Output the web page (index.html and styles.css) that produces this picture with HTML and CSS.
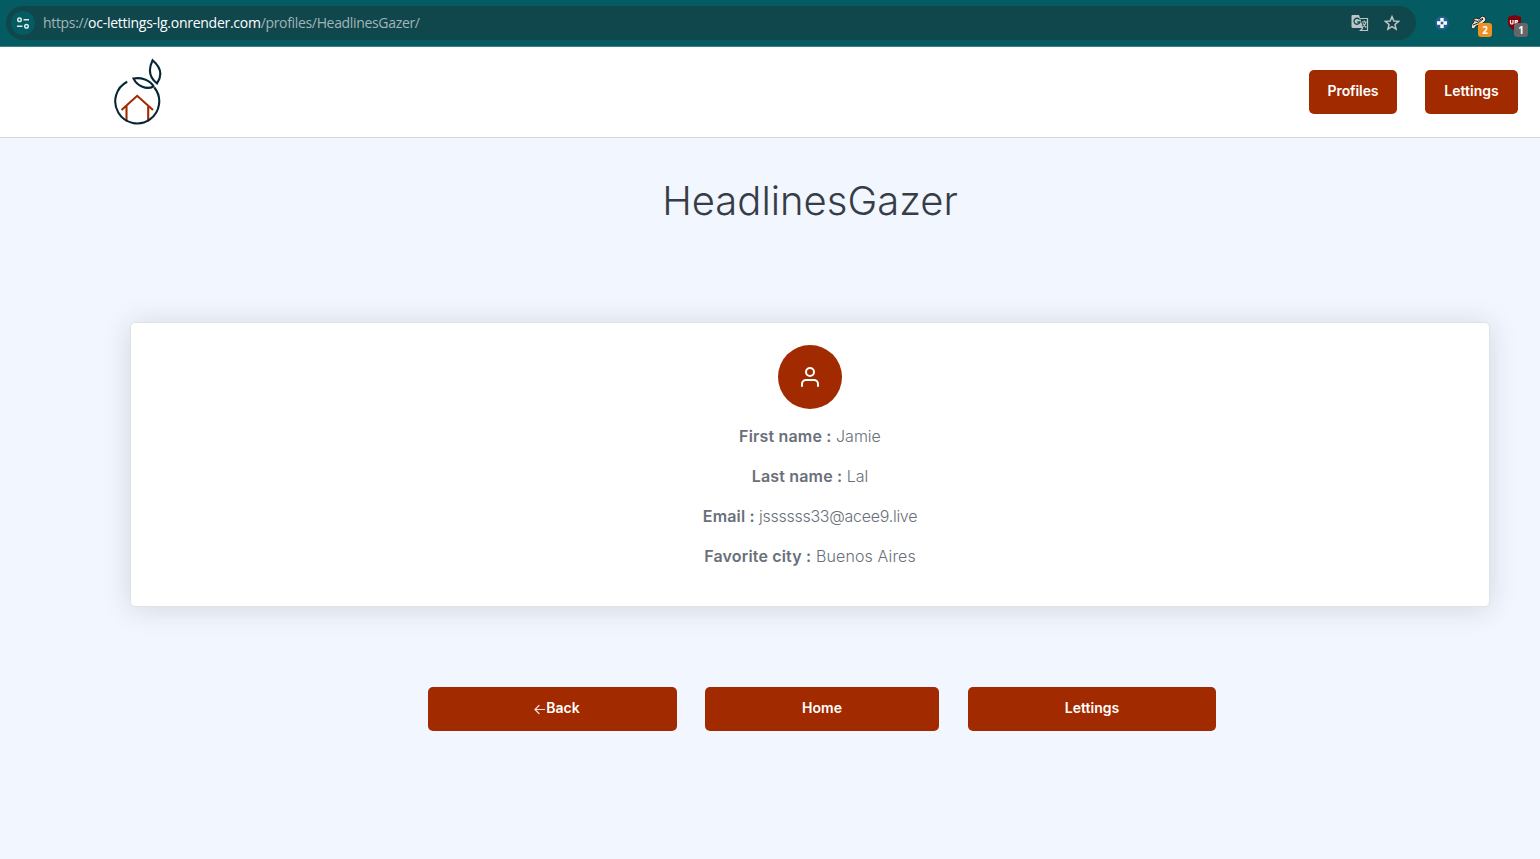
FILE: index.html
```
<!DOCTYPE html>
<html lang="en">
<head>
<meta charset="utf-8">
<title>HeadlinesGazer</title>
<link rel="stylesheet" href="styles.css">
</head>
<body>
<div class="browser-bar">
  <div class="address">
    <span class="site-info"><svg width="14" height="14" viewBox="0 0 14 14" fill="none" stroke="#dce9ea" stroke-width="1.5"><circle cx="3.5" cy="3.7" r="1.8"/><path d="M7.5 3.7H13M1 10.3H6.5"/><circle cx="10.5" cy="10.3" r="1.8"/></svg></span>
    <span class="url">https://<b>oc-lettings-lg.onrender.com</b>/profiles/HeadlinesGazer/</span>
    <svg class="translate" width="18" height="18" viewBox="0 0 18 18"><path fill="#bdc4c4" d="M1.500 1H8l1.200 3.500L12.300 14H2a1.500 1.500 0 0 1-1.500-1.500V2A1 1 0 0 1 1.500 1z"/><path d="M8.500 5.600A3 3 0 1 0 8.900 8H6.300" fill="none" stroke="#114a50" stroke-width="1.300"/><path fill="#10474d" d="M9.500 5H16v11h-5l1.300-2z"/><path d="M9 4.500h7.500v12H9.500l2.500-2.500M10.800 8h5M13.300 6.500V8M15 8c-.5 2.500-1.500 4-3 4.700M11.900 9.500l3.300 4" fill="none" stroke="#bdc4c4" stroke-width="1.200"/></svg>
    <svg class="star" width="16" height="16" viewBox="0 0 16 16" fill="none" stroke="#bdc4c4" stroke-width="1.500"><path d="M8 1.600l1.850 4.350 4.750.4-3.600 3.100 1.080 4.650L8 11.650 3.920 14.100 5 9.450 1.400 6.350l4.750-.4z"/></svg>
  </div>
  <div class="extensions">
    <svg width="14" height="14" viewBox="0 0 14 14"><circle cx="7" cy="7" r="7" fill="#235f91"/><path fill="#fff" d="M5.300 2h3.400v3.300H12v3.400H8.700V12H5.300V8.700H2V5.300h3.300z"/><rect x="5.700" y="5.700" width="2.600" height="2.600" fill="#235f91"/></svg>
    <span class="ext"><svg width="18" height="16" viewBox="0 0 18 16"><path d="M1 13l1-4 2-2-1-2 3-2 3 1 3-3 3 1 1 3-3 3-4 2-3 1-2 3z" fill="#e9ded1" stroke="#17201f" stroke-width=".9"/><path d="M4 5.500l4 1 2-2 3-1M3 10l5-2 5-4" stroke="#17201f" fill="none"/><path d="M7 9l2-1" stroke="#e57932"/></svg><i class="badge orange">2</i></span>
    <span class="ext"><svg width="16" height="16" viewBox="0 0 16 16"><path d="M8 0l6 2v5c0 4-2 6.500-6 8.500C3 13.500 1 11 1 7V2z" fill="#800009"/><path d="M3.500 5v3q0 1 1.300 1T6 8V5M8.200 9V5.500h2q1.500 1.500-2 2" fill="none" stroke="#fff" stroke-width="1.200"/></svg><i class="badge gray">1</i></span>
  </div>
</div>
<header class="topnav">
  <svg class="logo" width="48" height="68" viewBox="0 0 48 68" fill="none" stroke-width="2.100"><g stroke="#a22a00"><path d="M7.500 52L23.200 37.800 39 52M12.500 48v15.500M34.200 48v15.500"/></g><g stroke="#062733"><path d="M13.200 23.800A22 22 0 1 0 40.300 29.500"/><path d="M19.500 20.500c7-1.500 17 1.500 20 8-7 3.500-16 0-20-8z"/><path d="M38.600 2.200c8 6.800 10 15 4.400 23.200-8.500-6.500-8.500-14.800-4.400-23.200z"/></g></svg>
  <nav><a class="btn profiles">Profiles</a><a class="btn lettings">Lettings</a></nav>
</header>
<main>
  <h1>HeadlinesGazer</h1>
  <section class="card">
    <div class="avatar"><svg width="24" height="24" viewBox="0 0 24 24" fill="none" stroke="#fff" stroke-width="2" stroke-linecap="round" stroke-linejoin="round"><path d="M20 21v-2a4 4 0 0 0-4-4H8a4 4 0 0 0-4 4v2"/><circle cx="12" cy="7" r="4"/></svg></div>
    <p><strong>First name :</strong> Jamie</p>
    <p><strong>Last name :</strong> Lal</p>
    <p class="email"><strong>Email :</strong> jssssss33@acee9.live</p>
    <p class="city"><strong>Favorite city :</strong> Buenos Aires</p>
  </section>
</main>
<div class="actions">
  <a class="btn back"><svg width="11" height="11" viewBox="0 0 11 11" fill="none" stroke="#f3dfd8" stroke-width="1.200" stroke-linecap="round" stroke-linejoin="round"><path d="M10.500 5.500H1M5 1.500l-4 4 4 4"/></svg><span>Back</span></a>
  <a class="btn home">Home</a>
  <a class="btn to-lettings">Lettings</a>
</div>
</body>
</html>
```
FILE: styles.css
```
* { box-sizing: border-box; }
body { margin: 0; height: 859px; overflow: hidden; background: #f2f6fe; color: #69707a; font-family: Inter, sans-serif; }
svg { display: block; flex: none; }
.browser-bar { height: 47px; background: #045b61; border-bottom: 1px solid #3d7f84; display: flex; align-items: flex-start; padding: 6px 12px 0 6px; }
.address { width: 1410px; height: 34px; border-radius: 17px; background: #10474d; display: flex; align-items: center; padding: 0 16px 0 5px; }
.site-info { width: 24px; height: 24px; border-radius: 50%; background: #045b61; display: flex; align-items: center; justify-content: center; }
.url { margin-left: 8px; flex: 1; font: 14px/20px "Open Sans", "Noto Sans", sans-serif; letter-spacing: -.33px; color: #a0b5b7; white-space: nowrap; }
.url b { font-weight: 400; color: #fff; letter-spacing: -.27px; }
.star { margin-left: 15px; }
.extensions { display: flex; align-items: center; height: 34px; padding-left: 19px; gap: 21px; }
.ext { position: relative; width: 16px; height: 16px; }
.badge { position: absolute; left: 8px; top: 8px; width: 14px; height: 14px; border-radius: 3px; font: 700 10px/15px "Open Sans", sans-serif; color: #fff; text-align: center; }
.orange { background: #f09021; }
.gray { background: #666; left: 7px; }
.topnav { height: 91px; background: #fff; border-bottom: 1px solid #d1d5e0; display: flex; align-items: center; justify-content: space-between; padding: 0 22px 0 114px; }
nav { display: flex; gap: 28px; }
.btn { height: 44px; border-radius: 5px; background: #a22a00; color: #fff; font-size: 14px; line-height: 42px; font-weight: 600; text-align: center; }
.profiles { width: 88px; letter-spacing: -.1px; }
.lettings { width: 93px; }
main { padding: 39px 50px 0 130px; }
h1 { margin: 0; height: 48px; font-size: 40px; line-height: 48px; font-weight: 300; color: #363d47; text-align: center; }
.card { margin-top: 97px; height: 285px; background: #fff; border: 1px solid #e0e3e6; border-radius: 5px; box-shadow: 0 2px 28px rgba(33,40,40,.15); padding-top: 22px; text-align: center; }
.avatar { width: 64px; height: 64px; margin: 0 auto 15px; border-radius: 50%; background: #a22a00; display: flex; align-items: center; justify-content: center; }
p { margin: 0 0 16px; font-size: 16px; line-height: 24px; font-weight: 350; }
strong { font-weight: 600; letter-spacing: .17px; }
.email { letter-spacing: -.27px; }
.city { letter-spacing: .13px; }
.actions { display: flex; margin: 81px 0 0 428px; margin-top: 80px; }
.back { width: 249px; display: flex; align-items: center; justify-content: center; gap: 1px; padding-left: 9px; }
.back span { padding-bottom: 2px; }
.home { width: 234px; margin: 0 29px 0 28px; }
.to-lettings { width: 248px; }
```
